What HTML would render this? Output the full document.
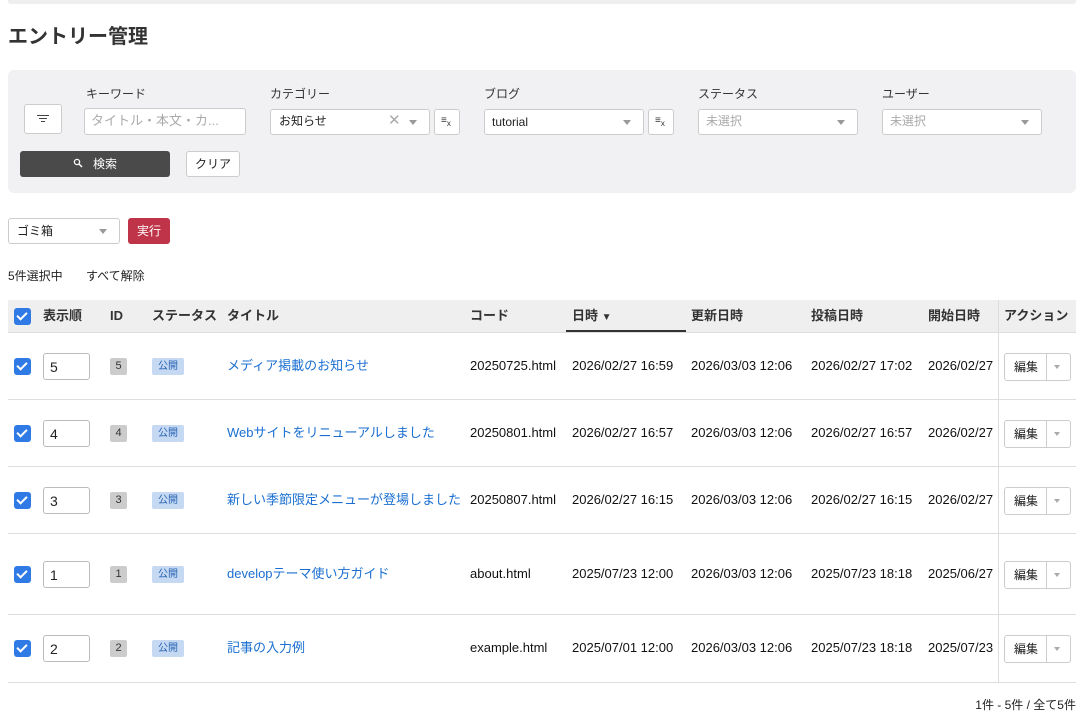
<!DOCTYPE html>
<html><head><meta charset="utf-8"><style>
*{box-sizing:border-box;margin:0;padding:0}
body{width:1084px;height:719px;overflow:hidden;background:#fff;font-family:"Liberation Sans","Noto Sans CJK JP",sans-serif;color:#222;font-size:13px;position:relative;line-height:16px}
.a{position:absolute;white-space:nowrap}
.box{position:absolute;background:#fff;border:1px solid #ccc;border-radius:3px}
.lbl{font-size:12px;color:#333}
.ph{color:#aaa;font-size:12px}
.caret{position:absolute;width:0;height:0;border-left:4px solid transparent;border-right:4px solid transparent;border-top:5px solid #999}
.cb{position:absolute;width:17px;height:17px;background:#2f7ae5;border-radius:3px}
.cb:after{content:"";position:absolute;left:5px;top:2px;width:4px;height:8px;border:solid #fff;border-width:0 2px 2px 0;transform:rotate(45deg)}
.h{font-weight:bold;color:#333;font-size:13px}
.row{position:absolute;left:8px;width:1068px;border-bottom:1px solid #ddd}
.num{position:absolute;left:43px;width:47px;height:27px;border:1px solid #bbb;border-radius:3px;padding:5px 0 0 6px;font-size:14px}
.id{position:absolute;left:110px;width:17px;height:17px;background:#ccc;border-radius:2px;font-size:11px;text-align:center;line-height:17px;color:#333}
.st{position:absolute;left:152px;width:32px;height:17px;background:#c6d9f3;border-radius:2px;font-size:10px;text-align:center;line-height:17px;color:#2864b4}
.t{position:absolute;left:227px;color:#1a6fd1;font-size:13px}
.c{position:absolute;font-size:13px;color:#111}
.ed{position:absolute;left:1004px;width:67px;height:28px;border:1px solid #ccc;border-radius:3px;font-size:12px}
.ed span{position:absolute;left:9px;top:5px}
.ed i{position:absolute;left:41px;top:0;height:26px;border-left:1px solid #ccc}
.fx{position:absolute;width:26px;height:26px;background:#fff;border:1px solid #ccc;border-radius:3px;font-size:10px;padding:3px 0 0 6px;color:#333}
</style></head><body>
<div class="a" style="left:8px;top:0;width:1068px;height:4px;background:#eee;border-radius:0 0 3px 3px"></div>
<div class="a" style="left:8px;top:24px;font-size:20px;font-weight:bold;color:#333;line-height:26px">エントリー管理</div>

<div class="a" style="left:8px;top:70px;width:1068px;height:123px;background:#f1f1f3;border-radius:6px"></div>
<div class="box" style="left:24px;top:104px;width:38px;height:30px"></div>
<div class="a" style="left:37px;top:115px;width:12px;border-top:1px solid #444"></div>
<div class="a" style="left:39px;top:118px;width:8px;border-top:1px solid #444"></div>
<div class="a" style="left:41px;top:121px;width:4px;border-top:1px solid #444"></div>

<div class="a lbl" style="left:86px;top:86px">キーワード</div>
<div class="box" style="left:84px;top:108px;width:162px;height:27px"></div>
<div class="a ph" style="left:91px;top:113px;font-size:13px">タイトル・本文・カ...</div>

<div class="a lbl" style="left:270px;top:86px">カテゴリー</div>
<div class="box" style="left:270px;top:109px;width:160px;height:26px"></div>
<div class="a" style="left:279px;top:113px;font-size:12px">お知らせ</div>
<div class="a" style="left:388px;top:113px;font-size:15px;color:#aaa">✕</div>
<div class="caret" style="left:409px;top:120px"></div>
<div class="fx" style="left:434px;top:109px">≡<sub style="font-size:8px">x</sub></div>

<div class="a lbl" style="left:484px;top:86px">ブログ</div>
<div class="box" style="left:484px;top:109px;width:160px;height:26px"></div>
<div class="a" style="left:492px;top:114px;font-size:12px">tutorial</div>
<div class="caret" style="left:623px;top:120px"></div>
<div class="fx" style="left:648px;top:109px">≡<sub style="font-size:8px">x</sub></div>

<div class="a lbl" style="left:698px;top:86px">ステータス</div>
<div class="box" style="left:698px;top:109px;width:160px;height:26px"></div>
<div class="a ph" style="left:706px;top:113px">未選択</div>
<div class="caret" style="left:837px;top:120px"></div>

<div class="a lbl" style="left:882px;top:86px">ユーザー</div>
<div class="box" style="left:882px;top:109px;width:160px;height:26px"></div>
<div class="a ph" style="left:890px;top:113px">未選択</div>
<div class="caret" style="left:1021px;top:120px"></div>

<div class="a" style="left:20px;top:151px;width:150px;height:26px;background:#4a4a4a;border-radius:3px"></div>
<svg class="a" style="left:73px;top:158px" width="10" height="10" viewBox="0 0 10 10"><circle cx="4" cy="4" r="2.6" fill="none" stroke="#fff" stroke-width="1.3"/><path d="M6 6L9 9" stroke="#fff" stroke-width="1.5"/></svg>
<div class="a" style="left:93px;top:156px;color:#fff;font-size:12px">検索</div>
<div class="box" style="left:186px;top:151px;width:54px;height:26px;font-size:12px;text-align:center;line-height:24px">クリア</div>

<div class="box" style="left:8px;top:218px;width:112px;height:26px"></div>
<div class="a" style="left:17px;top:223px;font-size:12px">ゴミ箱</div>
<div class="caret" style="left:99px;top:229px"></div>
<div class="a" style="left:128px;top:218px;width:42px;height:26px;background:#c0344a;border-radius:3px;color:#fff;font-size:12px;text-align:center;line-height:26px">実行</div>

<div class="a" style="left:8px;top:268px;font-size:12px">5件選択中</div>
<div class="a" style="left:86px;top:268px;font-size:12px">すべて解除</div>

<div class="a" style="left:8px;top:300px;width:1068px;height:33px;background:#efefef;border-bottom:1px solid #ddd"></div>
<div class="cb" style="left:14px;top:308px"></div>
<div class="a h" style="left:43px;top:308px">表示順</div>
<div class="a h" style="left:110px;top:308px">ID</div>
<div class="a h" style="left:152px;top:308px">ステータス</div>
<div class="a h" style="left:227px;top:308px">タイトル</div>
<div class="a h" style="left:470px;top:308px">コード</div>
<div class="a h" style="left:572px;top:308px">日時 <span style="font-size:10px">▼</span></div>
<div class="a" style="left:566px;top:330px;width:120px;height:2px;background:#333"></div>
<div class="a h" style="left:691px;top:308px">更新日時</div>
<div class="a h" style="left:811px;top:308px">投稿日時</div>
<div class="a h" style="left:928px;top:308px">開始日時</div>
<div class="a h" style="left:1004px;top:308px">アクション</div>
<div class="a" style="left:998px;top:300px;height:382px;border-left:1px solid #ddd"></div>

<div class="row" style="top:333px;height:67px"></div>
<div class="row" style="top:400px;height:67px"></div>
<div class="row" style="top:467px;height:67px"></div>
<div class="row" style="top:534px;height:81px"></div>
<div class="row" style="top:615px;height:68px"></div>

<div class="cb" style="left:14px;top:358px"></div><div class="num" style="top:353px">5</div><div class="id" style="top:358px">5</div><div class="st" style="top:358px">公開</div>
<div class="t a" style="top:358px">メディア掲載のお知らせ</div><div class="c a" style="left:470px;top:358px">20250725.html</div>
<div class="c a" style="left:572px;top:358px">2026/02/27 16:59</div><div class="c a" style="left:691px;top:358px">2026/03/03 12:06</div><div class="c a" style="left:811px;top:358px">2026/02/27 17:02</div><div class="c a" style="left:928px;top:358px;width:70px;overflow:hidden">2026/02/27</div>
<div class="ed" style="top:353px"><span>編集</span><i></i><div class="caret" style="left:49px;top:11px;border-top-color:#aaa;border-width:4px 3px 0"></div></div>

<div class="cb" style="left:14px;top:425px"></div><div class="num" style="top:420px">4</div><div class="id" style="top:425px">4</div><div class="st" style="top:425px">公開</div>
<div class="t a" style="top:425px">Webサイトをリニューアルしました</div><div class="c a" style="left:470px;top:425px">20250801.html</div>
<div class="c a" style="left:572px;top:425px">2026/02/27 16:57</div><div class="c a" style="left:691px;top:425px">2026/03/03 12:06</div><div class="c a" style="left:811px;top:425px">2026/02/27 16:57</div><div class="c a" style="left:928px;top:425px;width:70px;overflow:hidden">2026/02/27</div>
<div class="ed" style="top:420px"><span>編集</span><i></i><div class="caret" style="left:49px;top:11px;border-top-color:#aaa;border-width:4px 3px 0"></div></div>

<div class="cb" style="left:14px;top:492px"></div><div class="num" style="top:487px">3</div><div class="id" style="top:492px">3</div><div class="st" style="top:492px">公開</div>
<div class="t a" style="top:492px">新しい季節限定メニューが登場しました</div><div class="c a" style="left:470px;top:492px">20250807.html</div>
<div class="c a" style="left:572px;top:492px">2026/02/27 16:15</div><div class="c a" style="left:691px;top:492px">2026/03/03 12:06</div><div class="c a" style="left:811px;top:492px">2026/02/27 16:15</div><div class="c a" style="left:928px;top:492px;width:70px;overflow:hidden">2026/02/27</div>
<div class="ed" style="top:487px"><span>編集</span><i></i><div class="caret" style="left:49px;top:11px;border-top-color:#aaa;border-width:4px 3px 0"></div></div>

<div class="cb" style="left:14px;top:566px"></div><div class="num" style="top:561px">1</div><div class="id" style="top:566px">1</div><div class="st" style="top:566px">公開</div>
<div class="t a" style="top:566px">developテーマ使い方ガイド</div><div class="c a" style="left:470px;top:566px">about.html</div>
<div class="c a" style="left:572px;top:566px">2025/07/23 12:00</div><div class="c a" style="left:691px;top:566px">2026/03/03 12:06</div><div class="c a" style="left:811px;top:566px">2025/07/23 18:18</div><div class="c a" style="left:928px;top:566px;width:70px;overflow:hidden">2025/06/27</div>
<div class="ed" style="top:561px"><span>編集</span><i></i><div class="caret" style="left:49px;top:11px;border-top-color:#aaa;border-width:4px 3px 0"></div></div>

<div class="cb" style="left:14px;top:640px"></div><div class="num" style="top:635px">2</div><div class="id" style="top:640px">2</div><div class="st" style="top:640px">公開</div>
<div class="t a" style="top:640px">記事の入力例</div><div class="c a" style="left:470px;top:640px">example.html</div>
<div class="c a" style="left:572px;top:640px">2025/07/01 12:00</div><div class="c a" style="left:691px;top:640px">2026/03/03 12:06</div><div class="c a" style="left:811px;top:640px">2025/07/23 18:18</div><div class="c a" style="left:928px;top:640px;width:70px;overflow:hidden">2025/07/23</div>
<div class="ed" style="top:635px"><span>編集</span><i></i><div class="caret" style="left:49px;top:11px;border-top-color:#aaa;border-width:4px 3px 0"></div></div>

<div class="a" style="right:8px;top:697px;font-size:12px">1件 - 5件 / 全て5件</div>
</body></html>
